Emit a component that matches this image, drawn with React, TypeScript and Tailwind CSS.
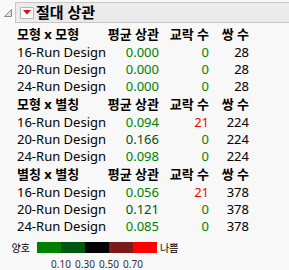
import React from "react";

const FONT = { fontFamily: '"Noto Sans", "Noto Sans CJK KR", sans-serif' };

type Row = { name: string; avg: string; avgColor: string; conf: string; confColor: string; pairs: string };
type Section = { title: string; rows: Row[] };

const G = "text-[#008000]";
const DG = "text-[#00500f]";
const R = "text-[#ff0000]";

const sections: Section[] = [
  {
    title: "모형 x 모형",
    rows: [
      { name: "16-Run Design", avg: "0.000", avgColor: G, conf: "0", confColor: G, pairs: "28" },
      { name: "20-Run Design", avg: "0.000", avgColor: G, conf: "0", confColor: G, pairs: "28" },
      { name: "24-Run Design", avg: "0.000", avgColor: G, conf: "0", confColor: G, pairs: "28" },
    ],
  },
  {
    title: "모형 x 별칭",
    rows: [
      { name: "16-Run Design", avg: "0.094", avgColor: G, conf: "21", confColor: R, pairs: "224" },
      { name: "20-Run Design", avg: "0.166", avgColor: DG, conf: "0", confColor: G, pairs: "224" },
      { name: "24-Run Design", avg: "0.098", avgColor: G, conf: "0", confColor: G, pairs: "224" },
    ],
  },
  {
    title: "별칭 x 별칭",
    rows: [
      { name: "16-Run Design", avg: "0.056", avgColor: G, conf: "21", confColor: R, pairs: "378" },
      { name: "20-Run Design", avg: "0.121", avgColor: DG, conf: "0", confColor: G, pairs: "378" },
      { name: "24-Run Design", avg: "0.085", avgColor: G, conf: "0", confColor: G, pairs: "378" },
    ],
  },
];

export default function App() {
  return (
    <div className="w-[289px] h-[270px] bg-[#f8f8f8] overflow-hidden text-black" style={FONT}>
      <div className="flex items-center pt-[2px]">
        <div className="w-[15px] h-[21px] flex items-center justify-center">
          <svg width="10" height="10" viewBox="0 0 10 10" className="mt-[1px]">
            <polygon points="8.5,1.5 8.5,8.5 1.5,8.5" fill="#e4e4e4" stroke="#8a8a8a" strokeWidth="1" />
          </svg>
        </div>
        <div className="flex-1 h-[21px] bg-[#ebebeb] border-y border-l border-[#c6c6c6] flex items-center pl-[4px]">
          <div className="w-[14px] h-[12px] border border-[#b5b5b5] bg-[#fafafa] flex items-center justify-center rounded-[1px]">
            <svg width="8" height="5" viewBox="0 0 8 5">
              <polygon points="0,0 8,0 4,4.5" fill="#d10f0f" />
            </svg>
          </div>
          <span className="ml-[2px] text-[15px] font-bold leading-none">절대 상관</span>
        </div>
      </div>

      <div className="pl-[17px] pt-[2px] text-[13px]">
        {sections.map((s) => (
          <div key={s.title}>
            <div className="flex h-[19px] items-center font-bold leading-none">
              <div className="w-[80px]">{s.title}</div>
              <div className="w-[62px] text-right">평균 상관</div>
              <div className="w-[50px] text-right">교락 수</div>
              <div className="w-[40px] text-right">쌍 수</div>
            </div>
            {s.rows.map((r) => (
              <div key={r.name} className="flex h-[17px] items-center leading-none">
                <div className="w-[80px] whitespace-nowrap">{r.name}</div>
                <div className={`w-[62px] text-right ${r.avgColor}`}>{r.avg}</div>
                <div className={`w-[50px] text-right ${r.confColor}`}>{r.conf}</div>
                <div className="w-[40px] text-right">{r.pairs}</div>
              </div>
            ))}
          </div>
        ))}
      </div>

      <div className="flex items-center mt-[6px]">
        <div className="w-[37px] text-[10px] leading-none text-right pr-[7px] pt-[2px]">양호</div>
        <div className="flex h-[11px]">
          <div className="w-[24px] bg-[#008000]" />
          <div className="w-[24px] bg-[#00550f]" />
          <div className="w-[24px] bg-[#000000]" />
          <div className="w-[24px] bg-[#7a1a1a]" />
          <div className="w-[24px] bg-[#ff0000]" />
        </div>
        <div className="text-[10px] leading-none pl-[3px] pt-[2px]">나쁨</div>
      </div>
      <div className="flex pl-[49px] mt-[6px] text-[10px] leading-none text-[#333]">
        <div className="w-[24px] text-center">0.10</div>
        <div className="w-[24px] text-center">0.30</div>
        <div className="w-[24px] text-center">0.50</div>
        <div className="w-[24px] text-center">0.70</div>
      </div>
    </div>
  );
}
